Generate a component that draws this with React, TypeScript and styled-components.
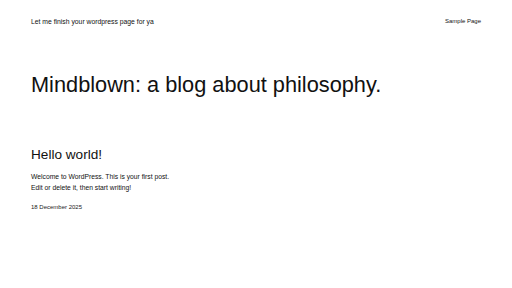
import React from "react";
import styled, { createGlobalStyle } from "styled-components";

const Global = createGlobalStyle`
  html, body { margin: 0; padding: 0; background: #fff; }
  body { font-family: "Liberation Sans", Arial, sans-serif; color: #111; }
`;

const Page = styled.div`
  width: 512px;
  height: 288px;
  box-sizing: border-box;
  padding: 0 31px;
  display: flex;
  flex-direction: column;
`;

const Header = styled.header`
  display: flex;
  justify-content: space-between;
  align-items: center;
  height: 42px;
`;

const SiteTitle = styled.div`
  font-size: 6.8px;
  color: #111;
`;

const NavLink = styled.a`
  font-size: 6px;
  color: #111;
  text-decoration: none;
`;

const Title = styled.h1`
  margin: 31px 0 0;
  font-weight: 400;
  font-size: 21.75px;
  line-height: 24px;
`;

const Post = styled.article`
  margin-top: 50px;
`;

const PostTitle = styled.h2`
  margin: 0;
  font-weight: 400;
  font-size: 13.6px;
  line-height: 1.2;
`;

const Body = styled.p`
  margin: 8px 0 0;
  font-size: 6.75px;
  line-height: 11px;
`;

const DateText = styled.div`
  margin-top: 11px;
  font-size: 6px;
  color: #222;
`;

export default function App() {
  return (
    <>
      <Global />
      <Page>
        <Header>
          <SiteTitle>Let me finish your wordpress page for ya</SiteTitle>
          <NavLink href="#">Sample Page</NavLink>
        </Header>
        <Title>Mindblown: a blog about philosophy.</Title>
        <Post>
          <PostTitle>Hello world!</PostTitle>
          <Body>
            Welcome to WordPress. This is your first post.
            <br />
            Edit or delete it, then start writing!
          </Body>
          <DateText>18 December 2025</DateText>
        </Post>
      </Page>
    </>
  );
}
